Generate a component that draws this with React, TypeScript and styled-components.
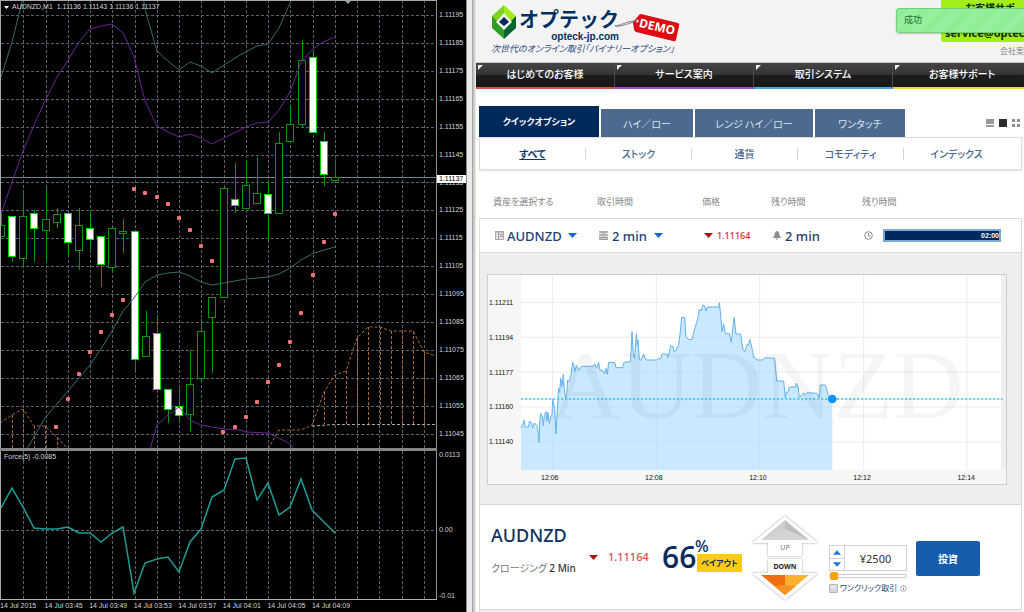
import React from "react";
import styled, { createGlobalStyle } from "styled-components";

const latin = '"Noto Sans", "Noto Sans CJK JP", sans-serif';
const japanese = '"Noto Sans CJK JP", "Noto Sans", sans-serif';
const compact = '"Liberation Sans", sans-serif';

const Global = createGlobalStyle`
  *, *::before, *::after { box-sizing: border-box; }
  body { margin: 0; background: #fff; font-family: ${latin}; overflow: hidden; }
  button, input, select { font: inherit; margin: 0; padding: 0; border: 0; background: none; color: inherit; }
  a { color: inherit; text-decoration: none; }
  svg { display: block; }
`;

/* ---------- page frame ---------- */

const Desktop = styled.div`
  display: grid;
  grid-template-columns: minmax(0, 466fr) 10px minmax(0, 548fr);
  height: 100vh;
  overflow: hidden;
`;

const WindowEdge = styled.div`
  background: linear-gradient(
    90deg,
    #8a8a8a 0, #8a8a8a 1px,
    #e9e9eb 1px, #e9e9eb 6px,
    #a3a3a3 6px, #a3a3a3 7px,
    #c6c6c6 7px, #d2d2d2 9px,
    #e6ecd8 9px, #e6ecd8 10px
  );
`;

/* ---------- trading terminal ---------- */

const Terminal = styled.section`
  display: grid;
  grid-template-columns: minmax(0, 1fr) 29px;
  grid-template-rows: minmax(0, 448fr) 3px minmax(0, 149fr) 12px;
  background: #000;
  color: #d4d4d4;
  font-family: ${compact};
  font-size: 7px;
  line-height: 8px;
`;

const Pane = styled.div`
  position: relative;
  border-left: 1px solid #a8a8a8;
  border-right: 1px solid #909090;
  svg { width: 100%; height: 100%; }
`;

const PricePane = styled(Pane)`
  border-top: 1px solid #a8a8a8;
`;

const ForcePane = styled(Pane)`
  border-bottom: 1px solid #b0b0b0;
`;

const PaneTitle = styled.div`
  position: absolute;
  top: 2px;
  left: 3px;
  display: flex;
  align-items: center;
  gap: 3px;
  white-space: pre;
  svg { width: 5px; height: 3px; }
`;

const Splitter = styled.div`
  grid-column: 1 / -1;
  margin-right: 29px;
  background: #868686;
`;

const Scale = styled.div`
  position: relative;
  display: flex;
  flex-direction: column;
  justify-content: space-between;
  padding: 11px 0 10px 2px;
`;

const ForceScale = styled(Scale)`
  padding: 0 0 0 2px;
  span:nth-child(2) { padding-top: 8px; }
`;

const LastPrice = styled.div`
  position: absolute;
  top: 39%;
  left: 0;
  right: 0;
  padding-left: 2px;
  background: #fff;
  color: #000;
`;

const TimeScale = styled.div`
  grid-column: 1 / -1;
  display: flex;
  margin-right: 29px;
  padding-top: 2px;
  white-space: nowrap;
  span { flex: 0 0 10.2%; }
`;

type Point = [number, number];
const line = (points: Point[]) => points.map((p) => p.join(",")).join(" ");
const barX = (i: number) => 1 + i * 11.13;

// [wick top, body top, body bottom, wick bottom, bearish]
const candles: [number, number, number, number, boolean][] = [
  [211, 225, 236, 236, false], [216, 216, 256, 262, true], [191, 216, 258, 268, false],
  [210, 213, 228, 262, true], [188, 219, 230, 262, false], [208, 214, 222, 228, false],
  [213, 213, 242, 256, true], [208, 225, 250, 270, false], [210, 228, 239, 250, true],
  [236, 236, 264, 287, true], [228, 228, 267, 272, false], [219, 231, 233, 253, false],
  [231, 231, 359, 370, true], [311, 336, 356, 356, false], [317, 333, 389, 392, true],
  [389, 389, 409, 423, true], [386, 406, 415, 420, true], [350, 384, 414, 432, false],
  [319, 331, 378, 382, false], [297, 297, 317, 373, false], [188, 188, 297, 297, false],
  [163, 199, 205, 213, true], [160, 185, 208, 208, false], [157, 193, 203, 203, false],
  [180, 194, 213, 240, true], [132, 143, 213, 213, false], [105, 124, 141, 143, false],
  [40, 60, 124, 127, false], [51, 57, 132, 132, true], [132, 141, 174, 186, true],
  [159, 177, 180, 180, false],
];

const sarDots: Point[] = [
  [56, 426], [68, 398], [79, 373], [90, 351], [101, 331], [112, 314], [123, 299],
  [134, 188], [145, 192], [157, 196], [168, 203], [179, 217], [190, 229], [201, 245], [212, 260],
  [223, 431], [235, 426], [246, 416], [257, 401], [268, 381], [279, 364], [290, 341],
  [301, 312], [313, 274], [324, 241], [335, 213],
];

const upperBand: Point[] = [
  [1, 214], [12, 182], [23, 151], [34, 125], [45, 101], [57, 77], [68, 60], [79, 42], [90, 29],
  [101, 26], [112, 24], [123, 33], [134, 57], [145, 101], [157, 126], [168, 132], [179, 137],
  [190, 134], [201, 138], [212, 144], [224, 138], [240, 130], [246, 127], [257, 123], [268, 122],
  [279, 110], [290, 92], [298, 71], [301, 62], [312, 50], [323, 42], [335, 37],
];
const lowerBand: Point[] = [
  [150, 449], [157, 425], [168, 415], [179, 407], [190, 420], [201, 425], [212, 427], [224, 429],
  [240, 430], [246, 432], [268, 433], [279, 438], [290, 444], [294, 449],
];
const outerBandLeft: Point[] = [[1, 77], [12, 42], [23, -2]];
const outerBand: Point[] = [
  [143, -3], [146, 13], [157, 51], [168, 61], [179, 70], [190, 62], [201, 66], [212, 73],
  [224, 65], [240, 55], [257, 46], [268, 44], [279, 28], [290, 3], [292, -3],
];
const middleBand: Point[] = [
  [27, 449], [45, 418], [68, 391], [90, 365], [101, 349], [112, 331], [123, 311], [134, 298],
  [145, 282], [157, 275], [168, 273], [179, 272], [190, 276], [201, 282], [212, 285], [224, 283],
  [240, 280], [246, 279], [268, 277], [279, 274], [290, 268], [301, 260], [312, 254], [324, 250],
  [335, 247],
];
const cloudLeft: Point[] = [[0, 423], [12, 415], [23, 409], [34, 426], [45, 426], [57, 437], [66, 447]];
const cloudTop: Point[] = [
  [268, 449], [279, 430], [301, 430], [312, 425], [324, 392], [335, 375], [346, 371], [357, 338],
  [368, 327], [380, 327], [391, 331], [402, 331], [413, 331], [424, 352], [436, 356],
];
const force: Point[] = [
  [1, 57], [12, 37], [23, 56], [34, 77], [45, 78], [57, 78], [68, 76], [79, 82], [90, 82],
  [101, 91], [112, 82], [123, 76], [134, 142], [145, 112], [157, 108], [168, 106], [179, 121],
  [190, 91], [201, 78], [212, 46], [224, 39], [235, 8], [246, 7], [257, 49], [268, 32], [279, 64],
  [290, 56], [301, 28], [312, 59], [335, 82],
];

const gridColumns = Array.from({ length: 19 }, (_, i) => Math.round(barX((i + 1) * 2)) + 0.5);
const priceLevels = Array.from({ length: 16 }, (_, i) => 195 - i * 10);
const timeLabels = [
  "14 Jul 2015", "14 Jul 03:45", "14 Jul 03:49", "14 Jul 03:53",
  "14 Jul 03:57", "14 Jul 04:01", "14 Jul 04:05", "14 Jul 04:09",
];

const GridLines = ({ height, levels }: { height: number; levels: number[] }) => (
  <g stroke="#56636f" strokeDasharray="3 2">
    {gridColumns.map((x) => <line key={x} x1={x} x2={x} y1={0} y2={height} />)}
    {levels.map((y) => <line key={y} x1={1} x2={436} y1={y} y2={y} />)}
  </g>
);

const PriceChart = () => (
  <svg viewBox="1 1 435 447" preserveAspectRatio="none" aria-hidden="true">
    <GridLines height={448} levels={priceLevels.map((_, i) => Math.round(15 + i * 27.9) + 0.5)} />
    <line x1={0} x2={436} y1={177.5} y2={177.5} stroke="#708088" />
    <g fill="none" stroke="#a86a35" strokeDasharray="3 2">
      <polyline points={line(cloudLeft)} />
      <polyline points={line(cloudTop)} />
      {cloudLeft.slice(1, 6).map(([x, y]) => <line key={x} x1={x + 0.5} x2={x + 0.5} y1={y} y2={448} />)}
      {cloudTop.slice(4).map(([x, y]) => <line key={x} x1={x + 0.5} x2={x + 0.5} y1={y} y2={424} />)}
    </g>
    <polyline points="312,426 335,424.5 436,424.5" fill="none" stroke="#b9a6a0" strokeDasharray="3 2" />
    {candles.map(([high, top, bottom, low, bearish], i) => {
      const x = Math.round(barX(i)) + 0.5;
      return (
        <g key={i} stroke={bearish ? "#00d800" : "#009800"}>
          <line x1={x} x2={x} y1={high} y2={low} stroke="#009800" />
          <rect x={x - 4} y={top + 0.5} width={7} height={bottom - top} fill={bearish ? "#fff" : "#000"} />
        </g>
      );
    })}
    <g fill="none" stroke="#6c2390">
      <polyline points={line(upperBand)} />
      <polyline points={line(lowerBand)} />
    </g>
    <g fill="none" stroke="#356a6a">
      <polyline points={line(outerBandLeft)} />
      <polyline points={line(outerBand)} />
      <polyline points={line(middleBand)} />
    </g>
    <g fill="#f27474">
      {sarDots.map(([x, y]) => <rect key={`${x}-${y}`} x={x - 2} y={y - 1} width={4} height={4} rx={1} />)}
    </g>
    <path d="M344 0h8l-4 4z" fill="#8c9cac" />
  </svg>
);

const ForceChart = () => (
  <svg viewBox="1 0 435 148" preserveAspectRatio="none" aria-hidden="true">
    <GridLines height={149} levels={[79.5]} />
    <polyline points={line(force)} fill="none" stroke="#1f9c95" strokeWidth={1.5} />
  </svg>
);

/* ---------- broker site ---------- */

const Site = styled.main`
  display: flex;
  flex-direction: column;
  background: #fff;
  overflow: hidden;
`;

const Header = styled.header`
  position: relative;
  display: flex;
  justify-content: space-between;
  height: 63px;
  padding-left: 15px;
  background: #f3f3f3;
  border-bottom: 1px solid #c4c4c4;
`;

const Brand = styled.div`
  padding-top: 4px;
`;

const BrandRow = styled.a`
  display: flex;
  gap: 2px;
`;

const BrandName = styled.div`
  display: flex;
  flex-direction: column;
  align-items: flex-end;
  color: #00305f;
  font-weight: 700;
`;

const BrandTitle = styled.span`
  font-family: ${japanese};
  font-size: 20px;
  line-height: 29px;
`;

const BrandDomain = styled.span`
  font-family: ${compact};
  font-size: 10px;
  line-height: 7px;
`;

const Tagline = styled.p`
  margin: 0;
  padding-top: 2px;
  color: #1f4a7c;
  font-family: ${japanese};
  font-feature-settings: "palt";
  font-size: 9px;
  font-style: italic;
  line-height: 14px;
  white-space: nowrap;
`;

const DemoTag = styled.div`
  position: absolute;
  top: 12px;
  left: 136px;
`;

const DemoText = styled.span`
  position: absolute;
  top: 7px;
  left: 27px;
  color: #fff;
  font-size: 12px;
  font-weight: 700;
  line-height: 16px;
  transform: rotate(13deg);
`;

const HeaderAside = styled.div`
  display: flex;
  flex-direction: column;
  align-items: flex-end;
  width: 83px;
  font-family: ${japanese};
`;

const SupportBox = styled.div`
  display: flex;
  flex-direction: column;
  justify-content: space-between;
  width: 100%;
  height: 42px;
  padding: 1px 0 2px 4px;
  overflow: hidden;
  background: #a2ee17;
  border-radius: 0 0 0 3px;
  color: #10300a;
  font-weight: 700;
  line-height: 14px;
  white-space: nowrap;
`;

const SupportTitle = styled.span`
  padding-left: 20px;
  font-size: 10px;
`;

const SupportMail = styled.a`
  font-family: ${latin};
  font-size: 11px;
`;

const CompanyLink = styled.a`
  padding-top: 2px;
  color: #858585;
  font-size: 8px;
  line-height: 14px;
  white-space: nowrap;
`;

const Toast = styled.div`
  position: absolute;
  top: 8px;
  right: -8px;
  width: 136px;
  height: 25px;
  padding-left: 7px;
  border: 1px solid #6fd07a;
  border-radius: 3px;
  background: repeating-linear-gradient(135deg, #8eee96 0, #8eee96 8px, #98f09f 8px, #98f09f 16px);
  box-shadow: 0 1px 2px rgba(0, 0, 0, 0.2);
  color: #246b30;
  font-family: ${japanese};
  font-size: 9px;
  line-height: 22px;
`;

const Nav = styled.nav`
  display: flex;
  overflow: hidden;
`;

const NavLink = styled.a<{ $accent: string }>`
  position: relative;
  flex: 1 0 139px;
  height: 26px;
  border-bottom: 2px solid ${(p) => p.$accent};
  border-right: 1px solid #4a4a4a;
  background: linear-gradient(#464345, #353334 50%, #1d1c1d 52%, #181818);
  color: #fff;
  font-family: ${japanese};
  font-feature-settings: "palt";
  font-size: 10px;
  font-weight: 500;
  line-height: 22px;
  text-align: center;
  &::before {
    content: "";
    position: absolute;
    top: 2px;
    left: 2px;
    border: solid transparent;
    border-width: 0 5px 5px 0;
    border-left: 0;
    border-top: 5px solid #f4f4f4;
    border-bottom: 0;
  }
`;

const Workspace = styled.div`
  display: flex;
  flex-direction: column;
  flex: 1;
  padding: 17px 2px 0 3px;
`;

const TabBar = styled.div`
  display: flex;
  align-items: flex-end;
  gap: 2px;
  height: 31px;
`;

const Tab = styled.button<{ $active?: boolean; $width: number }>`
  width: ${(p) => p.$width}px;
  height: ${(p) => (p.$active ? 31 : 28)}px;
  background: ${(p) => (p.$active ? "#00295c" : "#4c6a8f")};
  color: ${(p) => (p.$active ? "#fff" : "#dbe4ee")};
  font-family: ${japanese};
  font-feature-settings: "palt";
  font-size: ${(p) => (p.$active ? 9 : 10)}px;
  font-weight: ${(p) => (p.$active ? 700 : 400)};
`;

const ViewModes = styled.div`
  display: flex;
  gap: 4px;
  align-self: center;
  margin-left: auto;
  padding: 3px 1px 0 0;
`;

const IconButton = styled.button`
  display: block;
  width: 9px;
  height: 9px;
`;

const SubNav = styled.nav`
  display: flex;
  align-items: center;
  height: 33px;
  padding-right: 12px;
  border: 1px solid #dcdcdc;
  box-shadow: 0 1px 2px rgba(0, 0, 0, 0.12);
`;

const SubLink = styled.a<{ $active?: boolean }>`
  flex: 1;
  color: ${(p) => (p.$active ? "#0d3767" : "#46678f")};
  font-family: ${japanese};
  font-feature-settings: "palt";
  font-size: 10px;
  font-weight: ${(p) => (p.$active ? 700 : 500)};
  line-height: 12px;
  text-align: center;
  text-decoration: ${(p) => (p.$active ? "underline" : "none")};
  & + & { border-left: 1px solid #d5d5d5; }
`;

const MarketGrid = styled.div`
  display: grid;
  grid-template-columns: 104px 105px 69px 91px minmax(0, 1fr);
  align-items: center;
  padding-left: 14px;
`;

const MarketHead = styled(MarketGrid)`
  padding-top: 25px;
  padding-bottom: 9px;
  color: #858585;
  font-family: ${japanese};
  font-feature-settings: "palt";
  font-size: 9px;
  line-height: 14px;
`;

const MarketRow = styled(MarketGrid)`
  height: 35px;
  border: 1px solid #d8d8d8;
  border-left-color: #e6e6e6;
  padding-left: 15px;
`;

const Cell = styled.div<{ $gap?: number }>`
  display: flex;
  align-items: center;
  gap: ${(p) => p.$gap ?? 4}px;
  color: #1d3f72;
  font-size: 13px;
  font-weight: 500;
  line-height: 16px;
`;

const Picker = styled.select<{ $width: number }>`
  appearance: none;
  width: ${(p) => p.$width}px;
  height: 16px;
  font-size: 13px;
  line-height: 16px;
  text-overflow: clip;
`;

const Quote = styled.span<{ $size: number }>`
  color: ${(p) => (p.$size > 9 ? "#e8484c" : "#e0242a")};
  font-size: ${(p) => p.$size}px;
`;

const Countdown = styled.div`
  display: flex;
  align-items: center;
  justify-content: flex-end;
  flex: 1;
  height: 13px;
  margin: 0 20px 0 6px;
  border: 2px solid #79abd9;
  background: #002a5e;
  color: #fff;
  font-family: ${compact};
  font-size: 7px;
  font-weight: 700;
  line-height: 9px;
`;

const ChartSection = styled.section`
  padding: 21px 14px 19px 7px;
  background: #eee;
  border: solid #d8d8d8;
  border-width: 0 1px;
`;

const ChartCard = styled.div`
  display: grid;
  grid-template-columns: 33px minmax(0, 1fr) 5px;
  grid-template-rows: 195px 14px;
  border: 1px solid #cecece;
  background: #f6f6f6;
  color: #111;
  font-family: ${compact};
  font-size: 7px;
  line-height: 9px;
`;

const QuoteScale = styled.div`
  display: flex;
  flex-direction: column;
  justify-content: space-between;
  padding: 23px 0 24px 1px;
`;

const PlotArea = styled.div`
  position: relative;
  background: #fff;
  svg { width: 100%; height: 100%; overflow: visible; }
`;

const Watermark = styled.div`
  position: absolute;
  inset: 0 8px 0 0;
  padding-top: 55px;
  color: rgba(0, 0, 0, 0.04);
  font-family: "Liberation Serif", serif;
  font-size: 98px;
  line-height: 110px;
  text-align: center;
`;

const ClockScale = styled.div`
  grid-column: 2;
  display: flex;
  justify-content: space-between;
  padding: 3px 26px 0 20px;
`;

const StripRight = styled.div`
  background: #efefef;
`;

const TradePanel = styled.section`
  display: flex;
  height: 106px;
  padding-left: 11px;
  border: 1px solid #d8d8d8;
`;

const AssetInfo = styled.div`
  width: 98px;
  padding-top: 18px;
`;

const AssetName = styled.h2`
  margin: 0;
  color: #0d3260;
  font-size: 18px;
  font-weight: 500;
  line-height: 24px;
`;

const Closing = styled.p`
  margin: 0;
  padding-top: 14px;
  color: #777;
  font-family: ${japanese};
  font-feature-settings: "palt";
  font-size: 10px;
  line-height: 14px;
  b { color: #333; font-family: ${latin}; font-weight: 500; }
`;

const LiveQuote = styled(Cell)`
  align-items: flex-start;
  width: 73px;
  padding-top: 44px;
  svg { margin-top: 6px; }
`;

const Payout = styled.div`
  display: grid;
  grid-template-columns: 33px 47px;
  grid-template-rows: 16px 18px;
  align-content: start;
  width: 88px;
  padding-top: 33px;
  color: #0a2c5c;
`;

const PayoutValue = styled.span`
  grid-row: 1 / 3;
  font-family: "Open Sans", sans-serif;
  font-size: 30px;
  font-weight: 600;
  line-height: 38px;
`;

const PayoutPercent = styled.span`
  font-size: 16px;
  font-weight: 500;
  line-height: 16px;
`;

const PayoutBadge = styled.span`
  margin-left: 2px;
  background: #ffcb10;
  font-family: ${japanese};
  font-feature-settings: "palt";
  font-size: 8px;
  font-weight: 700;
  line-height: 18px;
  text-align: center;
`;

const Direction = styled.div`
  width: 70px;
  padding-top: 9px;
`;

const ArrowButton = styled.button<{ $down?: boolean }>`
  display: grid;
  width: 70px;
  height: 44px;
  color: ${(p) => (p.$down ? "#222" : "#8a8a8a")};
  font-size: 7px;
  font-weight: ${(p) => (p.$down ? 700 : 500)};
  line-height: 10px;
  > * { grid-area: 1 / 1; }
  span { align-self: ${(p) => (p.$down ? "start" : "end")}; padding: ${(p) => (p.$down ? "4px 0 0" : "0 0 5px")}; }
`;

const OrderForm = styled.form`
  display: flex;
  gap: 9px;
  padding: 36px 0 0 9px;
`;

const AmountColumn = styled.div`
  width: 78px;
  padding-top: 4px;
`;

const AmountBox = styled.div`
  display: grid;
  grid-template-columns: 15px minmax(0, 1fr);
  grid-template-rows: 12px 12px;
  border: 1px solid #d2d2d2;
`;

const Step = styled.button`
  display: grid;
  place-items: center;
  border-right: 1px solid #d2d2d2;
  & + & { border-top: 1px solid #d2d2d2; }
`;

const Amount = styled.input`
  grid-area: 1 / 2 / 3 / 3;
  width: 100%;
  color: #333;
  font-size: 11px;
  text-align: center;
`;

const Stake = styled.input`
  appearance: none;
  display: block;
  width: 100%;
  height: 8px;
  margin-top: 1px;
  &::-webkit-slider-runnable-track {
    height: 4px;
    border: 1px solid #c8c8c8;
    border-radius: 2px;
    background: #fff;
  }
  &::-webkit-slider-thumb {
    appearance: none;
    width: 8px;
    height: 8px;
    margin-top: -3px;
    border-radius: 2px;
    background: #ff9f0a;
  }
`;

const OneClick = styled.label`
  display: flex;
  align-items: center;
  gap: 2px;
  margin-top: 2px;
  color: #1f4576;
  font-family: ${japanese};
  font-feature-settings: "palt";
  font-size: 8px;
  line-height: 12px;
  white-space: nowrap;
  svg { margin-left: 1px; }
`;

const Tick = styled.input`
  appearance: none;
  width: 9px;
  height: 9px;
  border: 1px solid #b4b4b4;
  border-radius: 1px;
  background: linear-gradient(#e6e6e6, #d6d6d6);
`;

const Invest = styled.button`
  width: 64px;
  height: 35px;
  border-radius: 2px;
  background: #155cad;
  color: #fff;
  font-family: ${japanese};
  font-size: 10px;
  font-weight: 700;
`;

const Footer = styled.div`
  flex: 1;
  min-height: 2px;
  background: #eee;
`;

/* ---------- drawings ---------- */

const LogoMark = () => (
  <svg width="26" height="36" viewBox="0 0 26 36" aria-hidden="true">
    <path d="M13 1 1 12v12l12-12z" fill="#7ed31c" />
    <path d="M13 1 25 12v12L13 12z" fill="#a4ea18" />
    <path d="M1 12 13 24v11L1 24z" fill="#2f9c24" />
    <path d="M25 12 13 24v11l12-11z" fill="#07662f" />
    <path d="M13 9 5 18l8 8 8-8z" fill="#f3f3f3" />
    <path d="m13 13-5 5 5 4 5-4z" fill="#05285a" />
  </svg>
);

const TagShape = () => (
  <svg width="70" height="32" viewBox="0 0 70 32" aria-hidden="true">
    <path d="M29 2 66 11q2 1 1 3l-3 14q-1 2-3 1L24 20q-2-1-2-3l-1-6q0-1 1-2l5-6q1-1 2-1z" fill="#e00b12" />
    <circle cx="25" cy="9" r="1.5" fill="#f3f3f3" />
    <path d="M25 9C18 8 10 13 3 14M25 9C17 11 10 15 3 14" fill="none" stroke="#555" strokeWidth="0.7" />
  </svg>
);

const Triangle = ({ up, color, small }: { up?: boolean; color: string; small?: boolean }) => (
  <svg width={small ? 8 : 9} height="5" viewBox="0 0 9 5" aria-hidden="true">
    <path d={up ? "M4.500 0 9 5H0z" : "M0 0h9L4.500 5z"} fill={color} />
  </svg>
);

const ListIcon = () => (
  <svg width="9" height="9" viewBox="0 0 9 9" aria-hidden="true">
    <path d="M.5.500h8v8h-8z" fill="#e4e4e4" stroke="#aaa" />
    <path d="M0 1h9M3.500 2v6M5 3.500h3M5 5.500h3" stroke="#9a9a9a" />
  </svg>
);

const CalendarIcon = () => (
  <svg width="9" height="9" viewBox="0 0 9 9" aria-hidden="true">
    <path d="M0 1h9M0 4h9M0 6.500h9M0 8.500h9" stroke="#999" strokeWidth="1.400" />
    <path d="M2 2.500h5M3 5h4" stroke="#c4c4c4" />
  </svg>
);

const BellIcon = () => (
  <svg width="8" height="9" viewBox="0 0 8 9" aria-hidden="true">
    <path d="M4 0c2 .5 2.200 2 2.500 4L8 7H0l1.500-3C1.800 2 2 .5 4 0z" fill="#8d8d8d" />
    <path d="M3 8h2" stroke="#8d8d8d" />
  </svg>
);

const ClockIcon = () => (
  <svg width="9" height="9" viewBox="0 0 9 9" fill="none" stroke="#888" aria-hidden="true">
    <circle cx="4.500" cy="4.500" r="3.800" />
    <path d="M4.500 2v3h2" />
  </svg>
);

const InfoIcon = () => (
  <svg width="7" height="7" viewBox="0 0 7 7" fill="none" stroke="#888" strokeWidth="0.700" aria-hidden="true">
    <circle cx="3.500" cy="3.500" r="2.900" />
    <path d="M3.500 3v2.200M3.500 1.500v.8" stroke="#555" />
  </svg>
);

const ArrowPlate = styled.path`
  fill: #fff;
  filter: drop-shadow(0 0 1px rgba(0, 0, 0, 0.4));
`;

const UpArrow = () => (
  <svg width="70" height="44" viewBox="0 0 70 44" aria-hidden="true">
    <ArrowPlate d="M35 2 68 29H52v13H18V29H2z" />
    <path d="M35 6 11 26h24z" fill="#cfcfcf" />
    <path d="M35 6 59 26H35z" fill="#bebebe" />
    <path d="M35 15 11 26h48z" fill="#d4d4d4" />
  </svg>
);

const DownArrow = () => (
  <svg width="70" height="44" viewBox="0 0 70 44" aria-hidden="true">
    <ArrowPlate d="M18 1h34v14h16L35 42 2 15h16z" />
    <path d="M11 17h24v20z" fill="#f26c12" />
    <path d="M35 17h24L35 37z" fill="#fbb32f" />
    <path d="m35 27 11 1-11 9-11-9z" fill="#f8931f" />
  </svg>
);

// Quote history in chart units: time runs along x, price along y.
const history: Point[] = [
  [147, 728], [150, 722], [153, 717], [156, 705], [159, 726], [170, 726], [172, 710], [176, 710],
  [179, 718], [182, 728], [186, 715], [190, 716], [194, 722], [197, 730], [201, 772], [204, 700],
  [207, 685], [211, 695], [214, 722], [217, 692], [222, 680], [225, 708], [228, 682], [232, 715],
  [236, 695], [240, 690], [242, 642], [248, 670], [252, 747], [257, 660], [260, 610], [263, 622],
  [266, 580], [270, 605], [274, 568], [277, 615], [281, 640], [285, 618], [287, 585], [292, 590],
  [297, 570], [302, 532], [305, 538], [308, 560], [313, 542], [318, 552], [322, 556], [328, 544],
  [365, 544], [368, 537], [370, 540], [374, 550], [380, 532], [384, 556], [392, 556], [398, 567],
  [402, 550], [406, 568], [410, 532], [428, 532], [432, 548], [452, 548], [456, 532], [475, 530],
  [478, 490], [480, 440], [484, 510], [488, 520], [493, 447], [496, 480], [498, 465], [502, 525],
  [507, 525], [515, 508], [522, 525], [555, 525], [560, 520], [566, 522], [570, 507], [585, 507],
  [588, 518], [596, 482], [603, 485], [606, 500], [612, 496], [620, 478], [625, 440], [629, 397],
  [638, 397], [642, 455], [650, 464], [660, 463], [666, 440], [670, 425], [678, 398], [682, 372],
  [688, 378], [692, 360], [698, 362], [702, 378], [707, 366], [740, 366], [742, 353], [745, 380],
  [750, 440], [755, 417], [760, 446], [772, 446], [778, 472], [786, 397], [792, 447], [806, 447],
  [812, 490], [818, 500], [826, 478], [830, 480], [833, 463], [838, 480], [842, 500], [845, 518],
  [850, 518], [855, 525], [872, 525], [878, 518], [908, 520], [914, 588], [935, 588], [940, 638],
  [942, 622], [948, 622], [952, 606], [970, 606], [973, 595], [978, 605], [982, 638], [988, 630],
  [995, 625], [1000, 628], [1005, 623], [1035, 625], [1042, 638], [1045, 600], [1060, 600],
  [1066, 620], [1072, 642], [1081, 642],
];

const QuoteChart = () => (
  <svg viewBox="147 270 1440 585" preserveAspectRatio="none" aria-hidden="true">
    <g stroke="#ececec" strokeWidth="3">
      {[352, 457, 561, 666, 771].map((y) => <line key={y} x1="147" x2="1602" y1={y} y2={y} />)}
      {[242, 553, 863, 1175, 1485].map((x) => <line key={x} x1={x} x2={x} y1="270" y2="855" />)}
    </g>
    <polygon points={`147,855 ${line(history)} 1081,855`} fill="#9fd5ff" fillOpacity="0.55" />
    <polyline points={line(history)} fill="none" stroke="#62b2ee" strokeWidth="3" />
    <line x1="147" x2="1592" y1="642" y2="642" stroke="#35c7f5" strokeWidth="5" strokeDasharray="7 5" />
    <circle cx="1081" cy="642" r="13" fill="#0f93fa" />
  </svg>
);

const navItems = [
  ["はじめてのお客様", "#d6524f"], ["サービス案内", "#9a52d8"],
  ["取引システム", "#4aa7de"], ["お客様サポート", "#ecd54a"],
];

export default function App() {
  return (
    <>
      <Global />
      <Desktop>
        <Terminal aria-label="AUDNZD chart terminal">
          <PricePane>
            <PriceChart />
            <PaneTitle>
              <svg viewBox="0 0 5 3" aria-hidden="true"><path d="M0 0h5L2.500 3z" fill="#fff" /></svg>
              {"AUDNZD,M1  1.11136 1.11143 1.11136 1.11137"}
            </PaneTitle>
          </PricePane>
          <Scale>
            {priceLevels.map((p) => <span key={p}>{`1.11${String(p).padStart(3, "0")}`}</span>)}
            <LastPrice>1.11137</LastPrice>
          </Scale>
          <Splitter />
          <ForcePane>
            <ForceChart />
            <PaneTitle>Force(5) -0.0085</PaneTitle>
          </ForcePane>
          <ForceScale>
            <span>0.0113</span>
            <span>0.00</span>
            <span>-0.01</span>
          </ForceScale>
          <TimeScale>
            {timeLabels.map((t) => <span key={t}>{t}</span>)}
          </TimeScale>
        </Terminal>

        <WindowEdge />

        <Site>
          <Header>
            <Brand>
              <BrandRow href="#home">
                <LogoMark />
                <BrandName>
                  <BrandTitle>オプテック</BrandTitle>
                  <BrandDomain>opteck-jp.com</BrandDomain>
                </BrandName>
              </BrandRow>
              <Tagline>次世代のオンライン取引「バイナリーオプション」</Tagline>
            </Brand>
            <DemoTag>
              <TagShape />
              <DemoText>DEMO</DemoText>
            </DemoTag>
            <HeaderAside>
              <SupportBox>
                <SupportTitle>お客様サポ</SupportTitle>
                <SupportMail href="#mail">service@optec</SupportMail>
              </SupportBox>
              <CompanyLink href="#company">会社案</CompanyLink>
            </HeaderAside>
            <Toast role="status">成功</Toast>
          </Header>

          <Nav>
            {navItems.map(([label, accent]) => (
              <NavLink key={label} href="#nav" $accent={accent}>{label}</NavLink>
            ))}
          </Nav>

          <Workspace>
            <TabBar role="tablist">
              <Tab role="tab" $active $width={120}>クイックオプション</Tab>
              <Tab role="tab" $width={92}>ハイ／ロー</Tab>
              <Tab role="tab" $width={118}>レンジ ハイ／ロー</Tab>
              <Tab role="tab" $width={90}>ワンタッチ</Tab>
              <ViewModes>
                <IconButton aria-label="List view">
                  <svg width="9" height="9"><path d="M0 0h8v5H0zM0 6h8v2H0z" fill="#999" /></svg>
                </IconButton>
                <IconButton aria-label="Single view">
                  <svg width="9" height="9"><path d="M0 0h8v8H0z" fill="#2c2c2c" /></svg>
                </IconButton>
                <IconButton aria-label="Grid view">
                  <svg width="9" height="9"><path d="M0 0h3v3H0zM5 0h3v3H5zM0 5h3v3H0zM5 5h3v3H5z" fill="#8e8e8e" /></svg>
                </IconButton>
              </ViewModes>
            </TabBar>

            <SubNav>
              <SubLink href="#all" $active>すべて</SubLink>
              <SubLink href="#stock">ストック</SubLink>
              <SubLink href="#currency">通貨</SubLink>
              <SubLink href="#commodity">コモディティ</SubLink>
              <SubLink href="#index">インデックス</SubLink>
            </SubNav>

            <MarketHead>
              <span id="asset-label">資産を選択する</span>
              <span id="duration-label">取引時間</span>
              <span>価格</span>
              <span>残り時間</span>
              <span id="left-label">残り時間</span>
            </MarketHead>
            <MarketRow>
              <Cell $gap={3}>
                <ListIcon />
                <Picker $width={58} aria-labelledby="asset-label"><option>AUDNZD</option></Picker>
                <Triangle color="#1766d0" />
              </Cell>
              <Cell $gap={4}>
                <CalendarIcon />
                <Picker $width={38} aria-labelledby="duration-label"><option>2 min</option></Picker>
                <Triangle color="#1766d0" />
              </Cell>
              <Cell>
                <Triangle color="#a41313" />
                <Quote $size={9}>1.11164</Quote>
              </Cell>
              <Cell>
                <BellIcon />
                2 min
              </Cell>
              <Cell>
                <ClockIcon />
                <Countdown role="timer" aria-labelledby="left-label">02:00</Countdown>
              </Cell>
            </MarketRow>

            <ChartSection>
              <ChartCard>
                <QuoteScale>
                  {["1.11211", "1.11194", "1.11177", "1.11160", "1.11140"].map((q) => <span key={q}>{q}</span>)}
                </QuoteScale>
                <PlotArea>
                  <QuoteChart />
                  <Watermark aria-hidden="true">AUDNZD</Watermark>
                </PlotArea>
                <StripRight />
                <ClockScale>
                  {["12:06", "12:08", "12:10", "12:12", "12:14"].map((t) => <span key={t}>{t}</span>)}
                </ClockScale>
              </ChartCard>
            </ChartSection>

            <TradePanel>
              <AssetInfo>
                <AssetName>AUDNZD</AssetName>
                <Closing>クロージング <b>2 Min</b></Closing>
              </AssetInfo>
              <LiveQuote $gap={10}>
                <Triangle color="#a41313" />
                <Quote $size={11}>1.11164</Quote>
              </LiveQuote>
              <Payout>
                <PayoutValue>66</PayoutValue>
                <PayoutPercent>%</PayoutPercent>
                <PayoutBadge>ペイアウト</PayoutBadge>
              </Payout>
              <Direction>
                <ArrowButton><UpArrow /><span>UP</span></ArrowButton>
                <ArrowButton $down><DownArrow /><span>DOWN</span></ArrowButton>
              </Direction>
              <OrderForm onSubmit={(e) => e.preventDefault()}>
                <AmountColumn>
                  <AmountBox>
                    <Step type="button" aria-label="Increase amount"><Triangle up small color="#1f74e0" /></Step>
                    <Step type="button" aria-label="Decrease amount"><Triangle small color="#1f74e0" /></Step>
                    <Amount aria-label="Amount" defaultValue="¥2500" />
                  </AmountBox>
                  <Stake type="range" aria-label="Stake" min={0} max={100} defaultValue={0} />
                  <OneClick>
                    <Tick type="checkbox" />
                    ワンクリック取引
                    <InfoIcon />
                  </OneClick>
                </AmountColumn>
                <Invest type="submit">投資</Invest>
              </OrderForm>
            </TradePanel>
            <Footer />
          </Workspace>
        </Site>
      </Desktop>
    </>
  );
}
